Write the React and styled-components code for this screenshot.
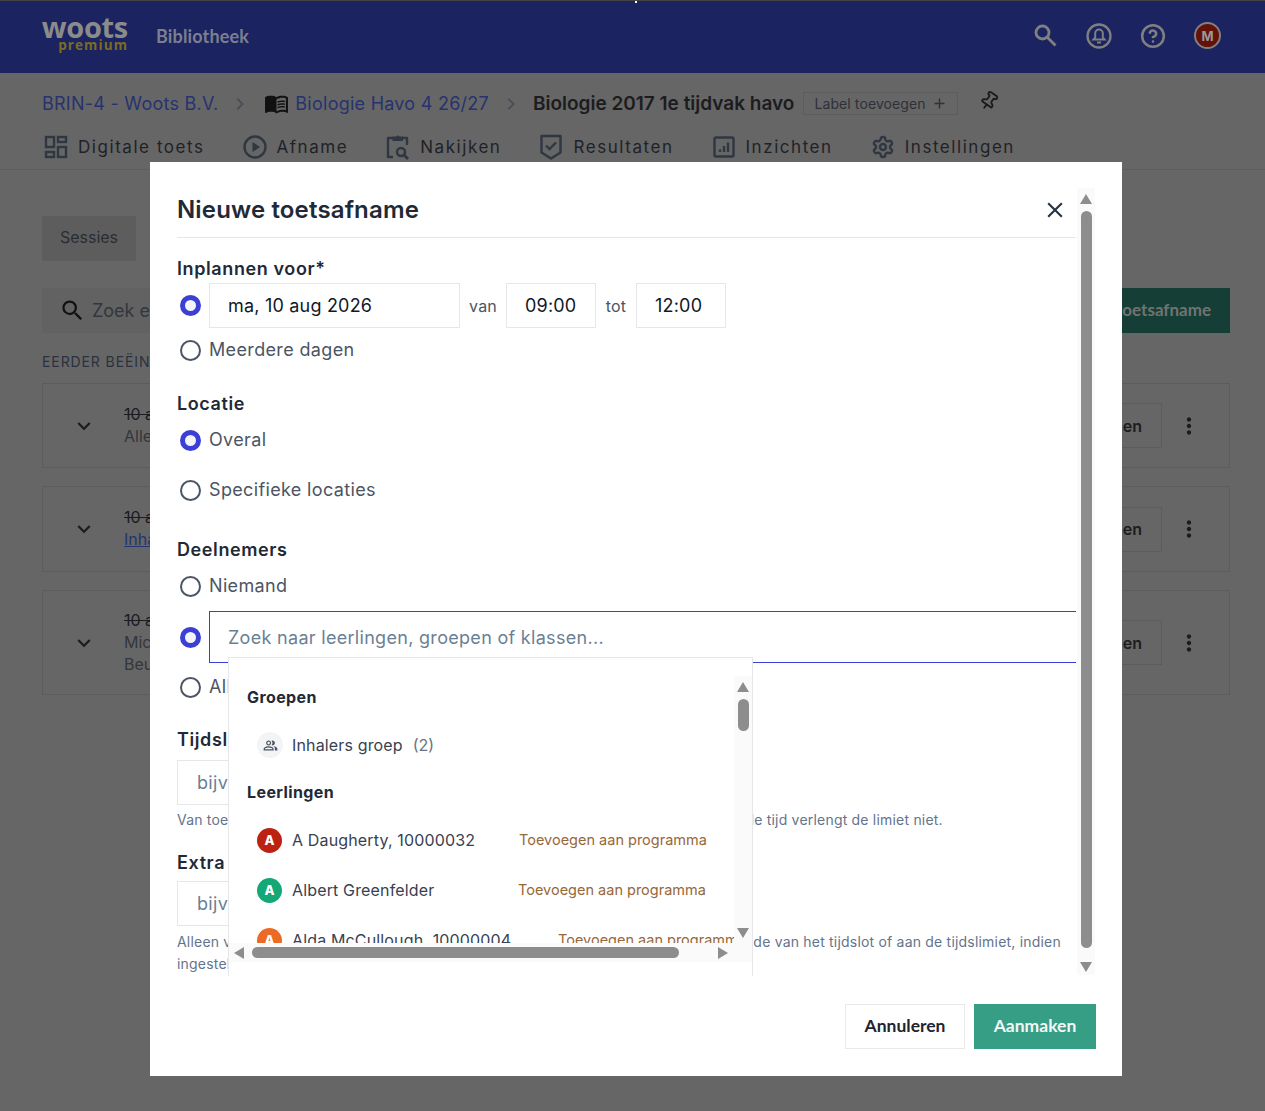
import React from "react"
import styled, { createGlobalStyle } from "styled-components"
import { MdMenuBook, MdSearch, MdExpandMore, MdMoreVert, MdOutlinePeopleAlt, MdChevronRight, MdAdd, MdClose } from "react-icons/md"
import { Settings, CircleHelp, Pin } from "lucide-react"

const GlobalStyle = createGlobalStyle`
  html, body {
    margin: 0;
    padding: 0;
    background: #666;
    overflow: hidden;
  }
  * {
    box-sizing: border-box;
  }
  body {
    font-family: Inter, "Noto Sans", sans-serif;
  }
`

const tabs = [
  { label: "Digitale toets", icon: <DashboardIcon /> },
  { label: "Afname", icon: <PlayIcon /> },
  { label: "Nakijken", icon: <ClipboardIcon /> },
  { label: "Resultaten", icon: <ShieldIcon /> },
  { label: "Inzichten", icon: <ChartIcon /> },
  { label: "Instellingen", icon: <Settings size={24} strokeWidth={2.4} /> },
]

const sessions = [
  { lines: ["Alle deelnemers"], height: 85, top: 12 },
  { lines: ["Inhalers groep"], link: true, height: 86, top: 18 },
  { lines: ["Mick de Vries", "Beuker"], height: 105, top: 18 },
]

const students = [
  { name: "A Daugherty, 10000032", color: "#bb2211", width: 227 },
  { name: "Albert Greenfelder", color: "#14a876", width: 226 },
  { name: "Alda McCullough, 10000004", color: "#ea6a26", width: 266 },
]

export default function App() {
  return (
    <Page>
      <GlobalStyle />
      <Header>
        <Logo>
          <LogoName>woots</LogoName>
          <LogoPlan>premium</LogoPlan>
        </Logo>
        <HeaderLink>Bibliotheek</HeaderLink>
        <HeaderIcons>
          <SearchGlyph />
          <BellIcon />
          <CircleHelp size={26} strokeWidth={2.3} />
          <Avatar>M</Avatar>
        </HeaderIcons>
      </Header>

      <Breadcrumb>
        <Crumb>BRIN-4 - Woots B.V.</Crumb>
        <CrumbArrow><MdChevronRight size={24} /></CrumbArrow>
        <BookIcon><MdMenuBook size={25} /></BookIcon>
        <Crumb>Biologie Havo 4 26/27</Crumb>
        <CrumbArrow><MdChevronRight size={24} /></CrumbArrow>
        <CrumbTitle>Biologie 2017 1e tijdvak havo</CrumbTitle>
        <LabelButton>Label toevoegen <MdAdd size={17} /></LabelButton>
        <PinIcon><Pin size={20} strokeWidth={2.2} /></PinIcon>
      </Breadcrumb>

      <TabBar>
        {tabs.map((tab) => (
          <Tab key={tab.label}>
            {tab.icon}
            <span>{tab.label}</span>
          </Tab>
        ))}
      </TabBar>

      <Content>
        <SubTabs>
          <SubTab $active>Sessies</SubTab>
          <SubTab>Resultaten</SubTab>
        </SubTabs>
        <Toolbar>
          <SearchBox>
            <MdSearch size={27} />
            <span>Zoek een sessie</span>
          </SearchBox>
          <GreenButton>Nieuwe toetsafname</GreenButton>
        </Toolbar>
        <SectionCaption>EERDER BEËINDIGD</SectionCaption>
        {sessions.map((s, i) => (
          <SessionCard key={i} $height={s.height} $top={s.top}>
            <MdExpandMore size={26} />
            <SessionText>
              <SessionDate>10 aug 2026</SessionDate>
              {s.lines.map((line) => (
                <SessionLine key={line} $link={s.link}>{line}</SessionLine>
              ))}
            </SessionText>
            <SessionButton>Openen</SessionButton>
            <MdMoreVert size={26} />
          </SessionCard>
        ))}
      </Content>

      <Modal>
        <ModalBody>
          <ScrollArea>
            <ModalHeader>
              <ModalTitle>Nieuwe toetsafname</ModalTitle>
              <CloseIcon><MdClose size={26} /></CloseIcon>
            </ModalHeader>

            <FieldLabel $top={19}>Inplannen voor*</FieldLabel>
            <OptionRow $top={2}>
              <Radio $checked />
              <TextInput $width={251}>ma, 10 aug 2026</TextInput>
              <TimeWord $width={46}>van</TimeWord>
              <TextInput $width={90}>09:00</TextInput>
              <TimeWord $width={40}>tot</TimeWord>
              <TextInput $width={90}>12:00</TextInput>
            </OptionRow>
            <OptionRow $top={10}><Radio /><OptionText>Meerdere dagen</OptionText></OptionRow>

            <FieldLabel $top={30}>Locatie</FieldLabel>
            <OptionRow $top={12}><Radio $checked /><OptionText>Overal</OptionText></OptionRow>
            <OptionRow $top={26}><Radio /><OptionText>Specifieke locaties</OptionText></OptionRow>

            <FieldLabel $top={36}>Deelnemers</FieldLabel>
            <OptionRow $top={12}><Radio /><OptionText>Niemand</OptionText></OptionRow>
            <OptionRow $top={13}>
              <Radio $checked />
              <SearchField>
                <Placeholder>Zoek naar leerlingen, groepen of klassen...</Placeholder>
                <Dropdown>
                  <DropdownMain>
                    <DropdownList>
                      <GroupTitle>Groepen</GroupTitle>
                      <ResultRow>
                        <GroupBadge><MdOutlinePeopleAlt size={15} /></GroupBadge>
                        <ResultName>Inhalers groep</ResultName>
                        <ResultCount>(2)</ResultCount>
                      </ResultRow>
                      <GroupTitle $top={10}>Leerlingen</GroupTitle>
                      {students.map((s) => (
                        <ResultRow key={s.name}>
                          <StudentBadge $color={s.color}>A</StudentBadge>
                          <ResultName $width={s.width}>{s.name}</ResultName>
                          <AddLink>Toevoegen aan programma</AddLink>
                        </ResultRow>
                      ))}
                    </DropdownList>
                    <SmallScrollbar>
                      <ArrowUp />
                      <SmallThumb />
                      <ScrollSpacer />
                      <ArrowDown />
                    </SmallScrollbar>
                  </DropdownMain>
                  <HorizontalScrollbar>
                    <ArrowLeft />
                    <HorizontalThumb />
                    <ArrowRight />
                  </HorizontalScrollbar>
                </Dropdown>
              </SearchField>
            </OptionRow>
            <OptionRow $top={12}><Radio /><OptionText>Alle leerlingen</OptionText></OptionRow>

            <FieldLabel $top={29}>Tijdslimiet</FieldLabel>
            <PlainInput $top={8}>bijv. 90</PlainInput>
            <Hint $top={4}>Van toepassing voor elke deelnemer, ongeacht de eigen starttijd, hieronder ingestelde tijd verlengt de limiet niet.</Hint>

            <FieldLabel $top={20}>Extra tijd</FieldLabel>
            <PlainInput $top={6}>bijv. 30</PlainInput>
            <Hint $top={5}>
              Alleen van toepassing voor deelnemers met een toegekende extra tijd tot aan het einde van het tijdslot of aan de tijdslimiet, indien
              <br />
              ingesteld.
            </Hint>
          </ScrollArea>
          <MainScrollbar>
            <ArrowUp />
            <MainThumb />
            <ArrowDown />
          </MainScrollbar>
        </ModalBody>
        <ModalFooter>
          <CancelButton>Annuleren</CancelButton>
          <CreateButton>Aanmaken</CreateButton>
        </ModalFooter>
      </Modal>
    </Page>
  )
}

function SearchGlyph() {
  return (
    <svg width="25" height="25" viewBox="0 0 25 25" fill="none" stroke="currentColor" strokeWidth="2.800">
      <circle cx="9.500" cy="9.500" r="6.500" />
      <path d="M14.500 14.500l8 8" />
    </svg>
  )
}

function DashboardIcon() {
  return (
    <svg width="24" height="24" viewBox="0 0 24 24" fill="none" stroke="currentColor" strokeWidth="2.400">
      <rect x="2" y="2" width="8" height="10" />
      <rect x="14" y="2" width="8" height="5" />
      <rect x="14" y="12" width="8" height="10" />
      <rect x="2" y="17" width="8" height="5" />
    </svg>
  )
}

function PlayIcon() {
  return (
    <svg width="24" height="24" viewBox="0 0 24 24" fill="none" stroke="currentColor" strokeWidth="2.400">
      <circle cx="12" cy="12" r="10.500" />
      <path d="M9.500 7v10l7.500-5z" fill="currentColor" stroke="none" />
    </svg>
  )
}

function ClipboardIcon() {
  return (
    <svg width="24" height="26" viewBox="0 0 24 26" fill="none" stroke="currentColor" strokeWidth="2.400" strokeLinejoin="round">
      <path d="M7 4H2v19h5M16 4h5v7" />
      <path d="M6.500 2.500h3.500a2 2 0 0 1 3.500 0h3.500V7H6.500z" fill="currentColor" stroke="none" />
      <circle cx="15" cy="18" r="4" strokeWidth="2.500" />
      <path d="M18 21l4 4" strokeWidth="2.800" />
    </svg>
  )
}

function ShieldIcon() {
  return (
    <svg width="24" height="26" viewBox="0 0 24 26" fill="none" stroke="currentColor" strokeWidth="2.400">
      <path d="M2.500 2h19v16.500L12 24.500 2.500 18.500z" strokeLinejoin="round" />
      <path d="M7 11.500l3.500 3.500L17 8.500" />
    </svg>
  )
}

function ChartIcon() {
  return (
    <svg width="24" height="24" viewBox="0 0 24 24" fill="none" stroke="currentColor" strokeWidth="2.400">
      <rect x="2.500" y="2.500" width="19" height="19" rx="1.500" />
      <path d="M8 17v-2.500M12 17v-6M16 17V7.500" strokeWidth="2.400" />
    </svg>
  )
}

function BellIcon() {
  return (
    <svg width="26" height="26" viewBox="0 0 26 26" fill="none" stroke="currentColor" strokeWidth="2.300">
      <circle cx="13" cy="13" r="11.500" />
      <path d="M13 6.500a3.800 3.800 0 0 0-3.800 3.800v4.200l-1.700 2h11l-1.700-2v-4.200A3.800 3.800 0 0 0 13 6.500z" strokeWidth="2" />
      <path d="M11 19.500h4" strokeWidth="2" />
    </svg>
  )
}

const Page = styled.div`
  position: relative;
  width: 1265px;
  height: 1111px;
  overflow: hidden;
  background: #666;
  color: #2a2d33;
`

const Header = styled.header`
  position: relative;
  height: 73px;
  display: flex;
  align-items: center;
  padding: 0 44px 3px 42px;
  background: #1b2361;
  border-top: 1px solid #444;
  &::after {
    content: "";
    position: absolute;
    top: 0;
    left: 635px;
    width: 2px;
    height: 2px;
    background: #fff;
  }
`

const Logo = styled.div`
  display: flex;
  flex-direction: column;
  align-items: flex-end;
  width: 87px;
  padding: 0 1px 3px 0;
  line-height: 1;
`

const LogoName = styled.span`
  font-family: "Open Sans", sans-serif;
  font-size: 29px;
  font-weight: 700;
  letter-spacing: -0.300px;
  line-height: 22px;
  color: #8b8b8b;
`

const LogoPlan = styled.span`
  font-family: "Open Sans", sans-serif;
  font-size: 13.500px;
  font-weight: 700;
  line-height: 14px;
  letter-spacing: 1.100px;
  color: #7a6d22;
`

const HeaderLink = styled.span`
  margin-left: 27px;
  font-family: Lato, sans-serif;
  font-size: 18px;
  font-weight: 700;
  letter-spacing: 0.150px;
  color: #7b7f8e;
`

const HeaderIcons = styled.div`
  margin-left: auto;
  display: flex;
  align-items: center;
  gap: 28px;
  color: #808080;
`

const Avatar = styled.span`
  width: 27px;
  height: 27px;
  display: grid;
  place-items: center;
  border-radius: 50%;
  background: #631109;
  border: 2px solid #808080;
  font-size: 13px;
  font-weight: 700;
  color: #999;
`

const Breadcrumb = styled.nav`
  display: flex;
  align-items: center;
  height: 60px;
  padding: 1px 0 0 42px;
`

const Crumb = styled.span`
  font-size: 18px;
  letter-spacing: 0.250px;
  color: #26336f;
`

const CrumbArrow = styled.span`
  display: flex;
  margin: 0 10px;
  color: #4a4f58;
`

const BookIcon = styled.span`
  display: flex;
  margin: 0 6px 0 2px;
  color: #111;
`

const CrumbTitle = styled.span`
  font-size: 19px;
  font-weight: 600;
  color: #1c1c1f;
`

const LabelButton = styled.span`
  display: flex;
  align-items: center;
  gap: 5px;
  height: 23px;
  margin-left: 9px;
  padding: 0 9px 0 10px;
  border: 1px solid #5c5c5c;
  font-size: 14px;
  letter-spacing: 0.100px;
  color: #2e3138;
`

const PinIcon = styled.span`
  display: flex;
  margin: -5px 0 0 21px;
  color: #1a1a1a;
  transform: rotate(35deg);
`

const TabBar = styled.div`
  display: flex;
  align-items: center;
  gap: 38px;
  height: 37px;
  padding: 0 0 8px 44px;
  border-bottom: 1px solid #5e5e5e;
`

const Tab = styled.div`
  display: flex;
  align-items: center;
  gap: 10px;
  font-size: 17px;
  letter-spacing: 1.550px;
  color: #1f2227;
  svg {
    flex: none;
    color: #2f3742;
  }
`

const Content = styled.main`
  display: flex;
  flex-direction: column;
  padding: 46px 35px 0 42px;
`

const SubTabs = styled.div`
  display: flex;
  height: 45px;
`

const SubTab = styled.div`
  width: ${(p) => (p.$active ? 94 : 220)}px;
  display: grid;
  place-items: center;
  padding-bottom: 3px;
  font-size: 16px;
  color: #2a2d33;
  background: ${(p) => (p.$active ? "#5d5d5d" : "#666")};
`

const Toolbar = styled.div`
  display: flex;
  justify-content: space-between;
  margin-top: 27px;
  height: 45px;
`

const SearchBox = styled.div`
  display: flex;
  align-items: center;
  gap: 6px;
  width: 400px;
  padding-left: 17px;
  background: #626262;
  font-size: 18px;
  color: #33363c;
  svg {
    color: #111;
  }
`

const GreenButton = styled.div`
  display: flex;
  align-items: center;
  padding: 0 19px 2px;
  background: #153f36;
  font-family: Lato, sans-serif;
  font-size: 17px;
  font-weight: 700;
  color: #6f7472;
`

const SectionCaption = styled.div`
  margin-top: 20px;
  height: 18px;
  font-size: 14px;
  letter-spacing: 0.900px;
  color: #2a3240;
`

const SessionCard = styled.div`
  display: flex;
  align-items: center;
  height: ${(p) => p.$height}px;
  margin-top: ${(p) => p.$top}px;
  padding: 0 27px 0 28px;
  border: 1px solid #5c5c5c;
  color: #1c1c1f;
`

const SessionText = styled.div`
  margin-left: 27px;
  padding-bottom: 2px;
  display: flex;
  flex-direction: column;
  font-size: 16px;
  line-height: 22px;
`

const SessionDate = styled.span`
  text-decoration: line-through;
`

const SessionLine = styled.span`
  color: ${(p) => (p.$link ? "#24346f" : "#33363c")};
  text-decoration: ${(p) => (p.$link ? "underline" : "none")};
`

const SessionButton = styled.div`
  margin-left: auto;
  margin-right: 14px;
  height: 45px;
  display: grid;
  place-items: center;
  padding: 0 19px;
  border: 1px solid #5c5c5c;
  font-size: 16px;
  font-weight: 600;
`

const Modal = styled.div`
  position: absolute;
  top: 162px;
  left: 150px;
  width: 972px;
  height: 914px;
  padding: 28px 26px 0 27px;
  background: #fff;
`

const ModalBody = styled.div`
  display: flex;
  height: 786px;
`

const ScrollArea = styled.div`
  width: 899px;
  flex: none;
  overflow: hidden;
`

const ModalHeader = styled.div`
  display: flex;
  justify-content: space-between;
  align-items: center;
  height: 48px;
  padding-bottom: 8px;
  border-bottom: 1px solid #e5e7eb;
`

const ModalTitle = styled.h2`
  margin: 0;
  font-size: 24px;
  font-weight: 600;
  color: #1f2937;
  letter-spacing: 0.150px;
`

const CloseIcon = styled.span`
  display: flex;
  margin-right: 8px;
  margin-top: 1px;
  color: #283443;
`

const FieldLabel = styled.div`
  margin-top: ${(p) => p.$top}px;
  height: 24px;
  line-height: 24px;
  font-size: 18px;
  font-weight: 600;
  letter-spacing: 0.600px;
  color: #1f2937;
`

const OptionRow = styled.div`
  display: flex;
  align-items: center;
  margin-top: ${(p) => p.$top}px;
  padding-left: 3px;
`

const Radio = styled.span`
  flex: none;
  width: 21px;
  height: 21px;
  margin-right: 8px;
  border-radius: 50%;
  background: ${(p) => (p.$checked ? "#f3f4f6" : "#fff")};
  border: ${(p) => (p.$checked ? "5px solid #3b3fd6" : "2px solid #4b5563")};
`

const OptionText = styled.span`
  height: 24px;
  line-height: 24px;
  font-size: 18px;
  letter-spacing: 0.350px;
  color: #4b5563;
`

const TextInput = styled.div`
  width: ${(p) => p.$width}px;
  height: 45px;
  display: flex;
  align-items: center;
  padding-left: 18px;
  border: 1px solid #e5e7eb;
  font-size: 18px;
  letter-spacing: 0.200px;
  color: #111827;
`

const TimeWord = styled.span`
  width: ${(p) => p.$width}px;
  text-align: center;
  font-size: 16px;
  letter-spacing: 0.200px;
  color: #4b5563;
`

const SearchField = styled.div`
  position: relative;
  flex: 1;
  height: 52px;
  display: flex;
  align-items: center;
  padding-left: 18px;
  border: 1px solid #3b3fd6;
  border-right: 0;
`

const Placeholder = styled.span`
  font-size: 18px;
  letter-spacing: 0.300px;
  color: #6b7f94;
`

const Dropdown = styled.div`
  position: absolute;
  z-index: 2;
  top: 45px;
  left: 18px;
  width: 525px;
  height: 320px;
  display: flex;
  flex-direction: column;
  background: #fff;
  border: 1px solid #e5e7eb;
`

const DropdownMain = styled.div`
  display: flex;
  height: 285px;
  flex: none;
`

const DropdownList = styled.div`
  flex: 1;
  min-width: 0;
  overflow: hidden;
  padding-top: 27px;
`

const GroupTitle = styled.div`
  height: 24px;
  line-height: 24px;
  margin-top: ${(p) => p.$top || 0}px;
  margin-bottom: 11px;
  padding-left: 18px;
  font-size: 16px;
  font-weight: 700;
  letter-spacing: 0.400px;
  color: #1f2937;
`

const ResultRow = styled.div`
  display: flex;
  align-items: center;
  height: 50px;
  padding-left: 28px;
  white-space: nowrap;
`

const GroupBadge = styled.span`
  flex: none;
  width: 26px;
  height: 26px;
  margin-right: 9px;
  display: grid;
  place-items: center;
  border-radius: 50%;
  background: #f3f4f6;
  color: #4b5563;
`

const StudentBadge = styled.span`
  flex: none;
  width: 25px;
  height: 25px;
  margin-right: 10px;
  display: grid;
  place-items: center;
  border-radius: 50%;
  background: ${(p) => p.$color};
  font-size: 13px;
  font-weight: 800;
  color: #fff;
`

const ResultName = styled.span`
  flex: none;
  width: ${(p) => (p.$width ? `${p.$width}px` : "auto")};
  padding-bottom: 1px;
  font-size: 16px;
  letter-spacing: 0.150px;
  color: #374151;
`

const ResultCount = styled.span`
  margin-left: 10px;
  font-size: 16px;
  color: #6b7280;
`

const AddLink = styled.span`
  padding-bottom: 1px;
  font-size: 14.500px;
  color: #96683a;
`

const SmallScrollbar = styled.div`
  flex: none;
  width: 18px;
  margin-top: 18px;
  display: flex;
  flex-direction: column;
  align-items: center;
  padding: 6px 0 5px;
  background: #fafafa;
`

const SmallThumb = styled.div`
  width: 11px;
  height: 32px;
  margin-top: 7px;
  border-radius: 6px;
  background: #8d8d8d;
`

const ScrollSpacer = styled.div`
  flex: 1;
`

const HorizontalScrollbar = styled.div`
  height: 19px;
  display: flex;
  align-items: center;
  padding: 0 24px 0 5px;
  background: #fafafa;
`

const HorizontalThumb = styled.div`
  width: 427px;
  height: 11px;
  margin: 0 39px 0 8px;
  border-radius: 6px;
  background: #8d8d8d;
`

const MainScrollbar = styled.div`
  flex: none;
  width: 18px;
  margin: -2px 0 0 1px;
  height: 787px;
  display: flex;
  flex-direction: column;
  align-items: center;
  padding: 6px 0 3px;
  background: #fafafa;
`

const MainThumb = styled.div`
  flex: 1;
  width: 11px;
  margin: 7px 0 14px;
  border-radius: 6px;
  background: #8d8d8d;
`

const ArrowUp = styled.span`
  flex: none;
  width: 0;
  height: 0;
  border-left: 6.500px solid transparent;
  border-right: 6.500px solid transparent;
  border-bottom: 10px solid #8d8d8d;
`

const ArrowDown = styled.span`
  flex: none;
  width: 0;
  height: 0;
  border-left: 6.500px solid transparent;
  border-right: 6.500px solid transparent;
  border-top: 10px solid #8d8d8d;
`

const ArrowLeft = styled.span`
  flex: none;
  width: 0;
  height: 0;
  border-top: 6.500px solid transparent;
  border-bottom: 6.500px solid transparent;
  border-right: 10px solid #8d8d8d;
`

const ArrowRight = styled.span`
  flex: none;
  width: 0;
  height: 0;
  border-top: 6.500px solid transparent;
  border-bottom: 6.500px solid transparent;
  border-left: 10px solid #8d8d8d;
`

const PlainInput = styled.div`
  width: 300px;
  height: 45px;
  margin-top: ${(p) => p.$top}px;
  display: flex;
  align-items: center;
  padding-left: 19px;
  border: 1px solid #e5e7eb;
  font-size: 18px;
  letter-spacing: 0.300px;
  color: #6b7f94;
`

const Hint = styled.div`
  margin-top: ${(p) => p.$top}px;
  font-size: 14px;
  line-height: 22px;
  letter-spacing: 0.200px;
  white-space: nowrap;
  color: #64748b;
`

const ModalFooter = styled.div`
  display: flex;
  justify-content: flex-end;
  gap: 9px;
  margin-top: 28px;
`

const CancelButton = styled.div`
  width: 120px;
  height: 45px;
  display: grid;
  place-items: center;
  padding-bottom: 3px;
  border: 1px solid #e9e9e9;
  font-family: Lato, sans-serif;
  font-size: 17.500px;
  font-weight: 700;
  color: #1f2430;
`

const CreateButton = styled.div`
  width: 122px;
  height: 45px;
  display: grid;
  place-items: center;
  padding-bottom: 3px;
  background: #359e85;
  font-family: Lato, sans-serif;
  font-size: 17.500px;
  font-weight: 700;
  color: #f3f7f5;
`
